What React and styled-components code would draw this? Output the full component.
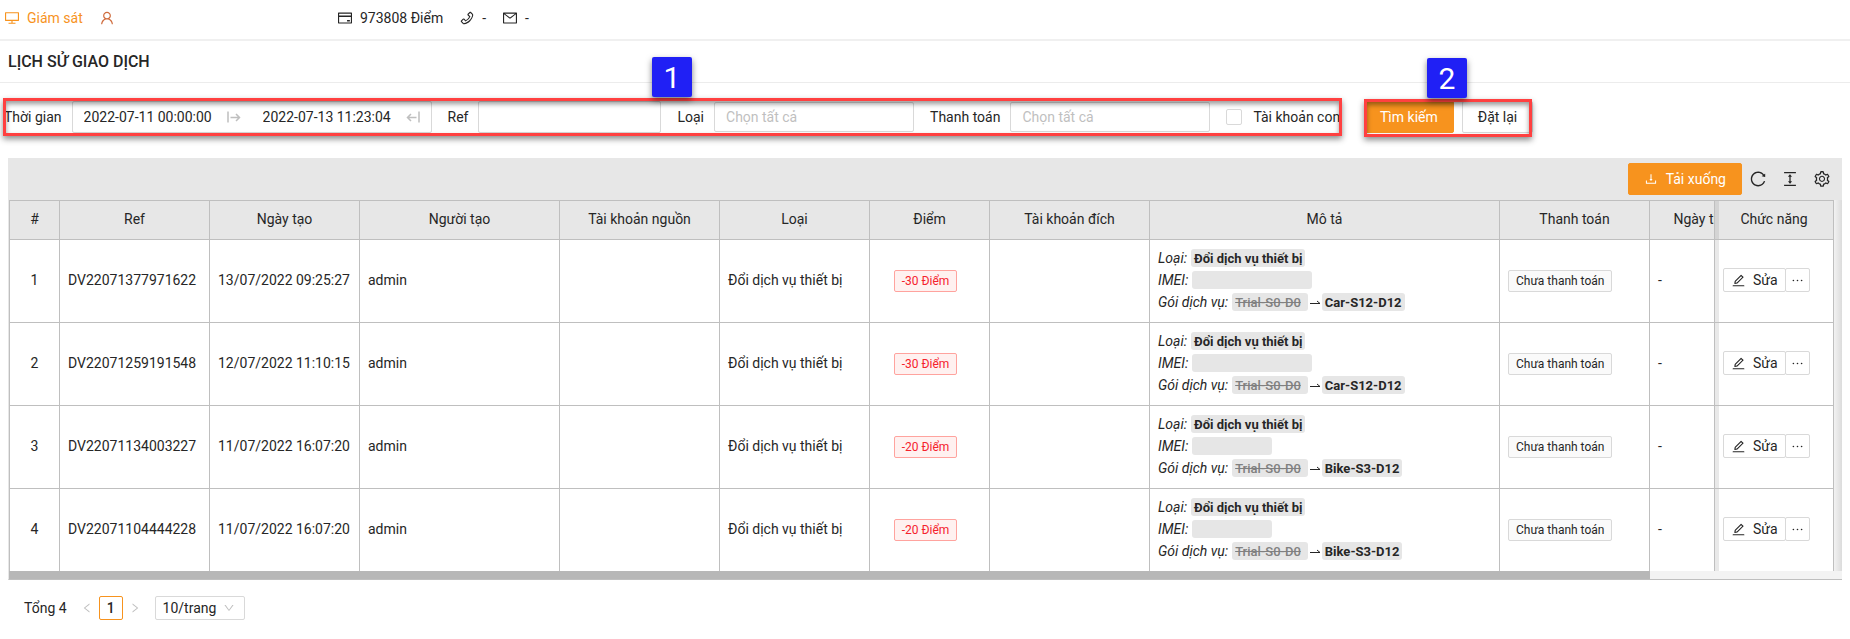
import React, { useState } from "react";
import styled, { createGlobalStyle, css } from "styled-components";
import {
  AiOutlineDesktop,
  AiOutlineUser,
  AiOutlineCreditCard,
  AiOutlinePhone,
  AiOutlineMail,
  AiOutlineDownload,
  AiOutlineReload,
  AiOutlineColumnHeight,
  AiOutlineSetting,
  AiOutlineEdit,
  AiOutlineEllipsis,
  AiOutlineLeft,
  AiOutlineRight,
  AiOutlineDown,
} from "react-icons/ai";

const orange = "#f7931e";
const line = "#bfbfbf";
const grey = "#e7e7e7";
const field = "#d9d9d9";

const GlobalStyle = createGlobalStyle`
  *, *::before, *::after { box-sizing: border-box; }
  body {
    margin: 0;
    background: #fff;
    color: #262626;
    font: 14px/22px Roboto, "Liberation Sans", sans-serif;
  }
  button, input, select { font: inherit; color: inherit; margin: 0; }
  svg { display: block; flex: none; }
`;

const TopBar = styled.header`
  display: flex;
  align-items: center;
  height: 41px;
  padding: 0 4px 4px;
  border-bottom: 2px solid #f0f0f0;
`;

const TopNav = styled.nav`
  display: flex;
  align-items: center;
  gap: 16px;
  width: 333px;
`;

const TopLink = styled.a`
  display: flex;
  align-items: center;
  gap: 7px;
  color: ${(p) => (p.$muted ? "#cf6b3c" : orange)};
  text-decoration: none;
`;

const Contacts = styled.div`
  display: flex;
  gap: 16px;
`;

const Contact = styled.span`
  display: flex;
  align-items: center;
  gap: 7px;
`;

const TitleBar = styled.div`
  padding: 10px 8px 9px;
  border-bottom: 1px solid #ececec;
`;

const Title = styled.h1`
  margin: 0;
  font-size: 16px;
  line-height: 22px;
  font-weight: 500;
`;

const Filters = styled.form`
  display: flex;
  align-items: flex-start;
  gap: 22px;
  padding: 15px 0 21px 3px;
`;

const Marked = styled.div`
  position: relative;
  display: flex;
  align-items: center;
  height: 38px;
  &::after {
    content: "";
    position: absolute;
    inset: 0;
    border: 3px solid #ff4040;
    box-shadow: 0 3px 6px rgba(0, 0, 0, 0.45), inset 0 3px 5px rgba(0, 0, 0, 0.4);
    pointer-events: none;
  }
`;

const FieldGroup = styled(Marked)`
  width: 1339px;
  gap: 16px;
  padding-left: 1px;
`;

const ButtonGroup = styled(Marked)`
  width: 168px;
  gap: 8px;
  padding-bottom: 2px;
  margin-top: 1px;
`;

const Step = styled.span`
  position: absolute;
  z-index: 1;
  left: ${(p) => p.$left};
  bottom: calc(100% + 1px);
  width: 40px;
  height: 40px;
  border-radius: 2px;
  background: #2020f5;
  color: #fff;
  font: 30px/42px Roboto, sans-serif;
  text-align: center;
  box-shadow: 0 3px 6px rgba(0, 0, 0, 0.5);
`;

const Field = styled.label`
  display: flex;
  align-items: center;
  gap: 10px;
  white-space: nowrap;
`;

const boxed = css`
  height: 32px;
  border: 1px solid ${field};
  border-radius: 2px;
  background: #fff;
  outline: 0;
`;

const Range = styled.div`
  ${boxed}
  display: flex;
  align-items: center;
  width: 360px;
`;

const RangePart = styled.span`
  display: flex;
  flex: 1 1 0;
  min-width: 0;
  align-items: center;
  padding-right: 11px;
  color: #bfbfbf;
`;

const DateInput = styled.input`
  flex: 1 1 0;
  min-width: 0;
  padding: 0 0 0 11px;
  border: 0;
  outline: 0;
  background: none;
  color: #262626;
`;

const TextInput = styled.input`
  ${boxed}
  width: 183px;
  padding: 0 11px;
`;

const SelectInput = styled.select`
  ${boxed}
  width: 200px;
  height: 30px;
  padding: 0 11px;
  appearance: none;
  color: #bfbfbf;
`;

const Check = styled.input`
  appearance: none;
  width: 16px;
  height: 16px;
  border: 1px solid ${field};
  border-radius: 2px;
  background: #fff;
`;

const CheckField = styled(Field)`
  gap: 11px;
`;

const Button = styled.button`
  display: flex;
  align-items: center;
  gap: 8px;
  height: 32px;
  padding: 0 ${(p) => p.$pad || 15}px;
  border: 1px solid ${(p) => (p.$primary ? orange : field)};
  border-radius: 2px;
  background: ${(p) => (p.$primary ? orange : "#fff")};
  color: ${(p) => (p.$primary ? "#fff" : "#262626")};
  white-space: nowrap;
`;

const Panel = styled.section`
  margin: 0 8px;
`;

const Toolbar = styled.div`
  display: flex;
  justify-content: flex-end;
  align-items: center;
  gap: 7px;
  height: 42px;
  padding: 0 11px 0 8px;
  background: ${grey};
`;

const Tools = styled.div`
  display: flex;
  gap: 14px;
`;

const IconButton = styled.button`
  display: flex;
  padding: 0;
  border: 0;
  background: none;
`;

const TableFrame = styled.div`
  display: flex;
  border-left: 1px solid ${grey};
`;

const Scroller = styled.div`
  flex: 1;
  min-width: 0;
  overflow-x: auto;
  scrollbar-width: none;
`;

const Gutter = styled.div`
  width: 8px;
  background: linear-gradient(to right, #f2f2f2, #dcdcdc);
`;

const Table = styled.table`
  width: 1911px;
  table-layout: fixed;
  border-collapse: separate;
  border-spacing: 0;
  border-top: 1px solid ${line};
  border-left: 1px solid ${line};
`;

const Th = styled.th`
  height: 39px;
  padding: 0 8px 2px;
  border-right: 1px solid ${line};
  border-bottom: 1px solid ${line};
  background: ${grey};
  font-weight: 400;
  text-align: center;
  white-space: nowrap;
  ${(p) =>
    p.$fixed &&
    css`
      position: sticky;
      right: 0;
      border-left: 1px solid ${line};
      background: linear-gradient(to right, #d4d4d4 4px, ${grey} 4px);
    `}
`;

const Td = styled.td`
  height: 83px;
  padding: 0 8px 2px;
  border-right: 1px solid ${line};
  border-bottom: 1px solid ${line};
  background: #fff;
  text-align: ${(p) => (p.$center ? "center" : "left")};
  white-space: nowrap;
  tr:last-child > & {
    height: 82px;
    border-bottom: 0;
  }
  ${(p) =>
    p.$fixed &&
    css`
      position: sticky;
      right: 0;
      border-left: 1px solid ${line};
      background: linear-gradient(to right, #e9e9e9 4px, #fff 4px);
    `}
`;

const Tag = styled.span`
  display: inline-block;
  margin-right: 8px;
  padding: 0 7px;
  border: 1px solid ${(p) => (p.$red ? "#ffa39e" : field)};
  border-radius: 2px;
  background: ${(p) => (p.$red ? "#fff1f0" : "#fafafa")};
  color: ${(p) => (p.$red ? "#f5222d" : "#262626")};
  font-size: 12px;
  line-height: 20px;
`;

const Detail = styled.div`
  display: flex;
  align-items: center;
  gap: 4px;
  height: 22px;
`;

const Chip = styled.strong`
  height: 18px;
  padding: 0 3px;
  border-radius: 3px;
  background: #e6e6e6;
  font-size: 13px;
  line-height: 19px;
  font-weight: 700;
`;

const OldChip = styled.del`
  height: 18px;
  padding: 0 7px 0 3px;
  border-radius: 3px;
  background: #e6e6e6;
  color: #808080;
  font-size: 13px;
  line-height: 19px;
  font-weight: 500;
`;

const Blank = styled.span`
  width: ${(p) => p.$width}px;
  height: 18px;
  border-radius: 3px;
  background: #e6e6e6;
`;

const Change = styled.span`
  display: flex;
  align-items: center;
  gap: 2px;
`;

const Actions = styled.div`
  display: flex;
`;

const ActionButton = styled.button`
  display: flex;
  align-items: center;
  gap: 7px;
  height: 24px;
  padding: 0 ${(p) => (p.$more ? 4 : 7)}px;
  border: 1px solid ${field};
  border-radius: 2px;
  background: #fff;
  & + & {
    margin-left: -1px;
  }
`;

const Track = styled.div`
  height: 9px;
  border-bottom: 1px solid ${line};
  border-left: 1px solid ${grey};
  background: #f3f3f3;
`;

const Thumb = styled.div`
  width: 1641px;
  max-width: 90%;
  height: 8px;
  background: #b7b7b7;
`;

const Pager = styled.nav`
  display: flex;
  align-items: center;
  gap: 6px;
  padding: 16px;
`;

const PageStep = styled.button`
  display: flex;
  padding: 0;
  border: 0;
  background: none;
  color: #bfbfbf;
`;

const PageNumber = styled.button`
  width: 24px;
  height: 24px;
  padding: 0;
  border: 1px solid ${orange};
  border-radius: 2px;
  background: #fff;
  font-weight: 500;
  line-height: 22px;
`;

const Total = styled.span`
  margin-right: 8px;
`;

const SizeBox = styled.span`
  display: grid;
  align-items: center;
  margin-left: 8px;
  > * {
    grid-area: 1 / 1;
  }
  svg {
    justify-self: end;
    margin-right: 10px;
    color: #bfbfbf;
    pointer-events: none;
  }
`;

const SizeSelect = styled.select`
  width: 90px;
  height: 24px;
  padding: 0 7px;
  border: 1px solid ${field};
  border-radius: 2px;
  background: #fff;
  appearance: none;
`;

const columns = [
  ["#", 50],
  ["Ref", 150],
  ["Ngày tạo", 150],
  ["Người tạo", 200],
  ["Tài khoản nguồn", 160],
  ["Loại", 150],
  ["Điểm", 120],
  ["Tài khoản đích", 160],
  ["Mô tả", 350],
  ["Thanh toán", 150],
  ["Ngày thanh toán", 150],
  ["Chức năng", 120],
];

const rows = [
  { ref: "DV22071377971622", date: "13/07/2022 09:25:27", points: "-30 Điểm", imei: 120, plan: "Car-S12-D12" },
  { ref: "DV22071259191548", date: "12/07/2022 11:10:15", points: "-30 Điểm", imei: 120, plan: "Car-S12-D12" },
  { ref: "DV22071134003227", date: "11/07/2022 16:07:20", points: "-20 Điểm", imei: 80, plan: "Bike-S3-D12" },
  { ref: "DV22071104444228", date: "11/07/2022 16:07:20", points: "-20 Điểm", imei: 80, plan: "Bike-S3-D12" },
];

function StartIcon() {
  return (
    <svg width="14" height="14" viewBox="0 0 14 14" fill="none" stroke="currentColor" strokeWidth="1.500">
      <path d="M1 1.500v11M3.500 7.500h9M9 4l3.500 3.500L9 11" />
    </svg>
  );
}

function EndIcon() {
  return (
    <svg width="14" height="14" viewBox="0 0 14 14" fill="none" stroke="currentColor" strokeWidth="1.500">
      <path d="M13 1.500v11M10.500 7.500h-9M5 4L1.500 7.500 5 11" />
    </svg>
  );
}

function Harpoon() {
  return (
    <svg width="10" height="8" viewBox="0 0 10 8" fill="none" stroke="#262626">
      <path d="M0 5.500h10L7 3" />
    </svg>
  );
}

function Row({ row, index }) {
  return (
    <tr>
      <Td $center>{index}</Td>
      <Td>{row.ref}</Td>
      <Td>{row.date}</Td>
      <Td>admin</Td>
      <Td />
      <Td>Đổi dịch vụ thiết bị</Td>
      <Td $center>
        <Tag $red>{row.points}</Tag>
      </Td>
      <Td />
      <Td>
        <Detail>
          <em>Loại:</em>
          <Chip>Đổi dịch vụ thiết bị</Chip>
        </Detail>
        <Detail>
          <em>IMEI:</em>
          <Blank $width={row.imei} />
        </Detail>
        <Detail>
          <em>Gói dịch vụ:</em>
          <Change>
            <OldChip>Trial-S0-D0</OldChip>
            <Harpoon />
            <Chip>{row.plan}</Chip>
          </Change>
        </Detail>
      </Td>
      <Td>
        <Tag>Chưa thanh toán</Tag>
      </Td>
      <Td>-</Td>
      <Td $fixed>
        <Actions>
          <ActionButton type="button">
            <AiOutlineEdit size={15} />
            Sửa
          </ActionButton>
          <ActionButton type="button" $more aria-label="Thêm">
            <AiOutlineEllipsis size={15} />
          </ActionButton>
        </Actions>
      </Td>
    </tr>
  );
}

export default function App() {
  const [from, setFrom] = useState("2022-07-11 00:00:00");
  const [to, setTo] = useState("2022-07-13 11:23:04");
  return (
    <>
      <GlobalStyle />
      <TopBar>
        <TopNav>
          <TopLink href="#monitor">
            <AiOutlineDesktop size={16} />
            Giám sát
          </TopLink>
          <TopLink href="#account" $muted aria-label="Tài khoản">
            <AiOutlineUser size={16} />
          </TopLink>
        </TopNav>
        <Contacts>
          <Contact>
            <AiOutlineCreditCard size={16} />
            973808 Điểm
          </Contact>
          <Contact>
            <AiOutlinePhone size={16} />-
          </Contact>
          <Contact>
            <AiOutlineMail size={16} />-
          </Contact>
        </Contacts>
      </TopBar>
      <TitleBar>
        <Title>LỊCH SỬ GIAO DỊCH</Title>
      </TitleBar>
      <Filters onSubmit={(e) => e.preventDefault()}>
        <FieldGroup>
          <Step $left="649px">1</Step>
          <Field as="div">
            <label htmlFor="from">Thời gian</label>
            <Range>
              <RangePart>
                <DateInput id="from" value={from} onChange={(e) => setFrom(e.target.value)} />
                <StartIcon />
              </RangePart>
              <RangePart>
                <DateInput aria-label="Đến" value={to} onChange={(e) => setTo(e.target.value)} />
                <EndIcon />
              </RangePart>
            </Range>
          </Field>
          <Field>
            Ref
            <TextInput />
          </Field>
          <Field>
            Loại
            <SelectInput>
              <option>Chọn tất cả</option>
            </SelectInput>
          </Field>
          <Field>
            Thanh toán
            <SelectInput>
              <option>Chọn tất cả</option>
            </SelectInput>
          </Field>
          <CheckField>
            <Check type="checkbox" />
            Tài khoản con
          </CheckField>
        </FieldGroup>
        <ButtonGroup>
          <Step $left="63px">2</Step>
          <Button $primary>Tìm kiếm</Button>
          <Button type="reset">Đặt lại</Button>
        </ButtonGroup>
      </Filters>
      <Panel>
        <Toolbar>
          <Button type="button" $primary>
            <AiOutlineDownload size={14} />
            Tải xuống
          </Button>
          <Tools>
            <IconButton aria-label="Tải lại">
              <AiOutlineReload size={18} />
            </IconButton>
            <IconButton aria-label="Mật độ">
              <AiOutlineColumnHeight size={18} />
            </IconButton>
            <IconButton aria-label="Cài đặt">
              <AiOutlineSetting size={18} />
            </IconButton>
          </Tools>
        </Toolbar>
        <TableFrame>
          <Scroller>
            <Table>
              <colgroup>
                {columns.map(([name, width]) => (
                  <col key={name} width={width} />
                ))}
              </colgroup>
              <thead>
                <tr>
                  {columns.map(([name]) => (
                    <Th key={name} $fixed={name === "Chức năng"}>
                      {name}
                    </Th>
                  ))}
                </tr>
              </thead>
              <tbody>
                {rows.map((row, i) => (
                  <Row key={row.ref} row={row} index={i + 1} />
                ))}
              </tbody>
            </Table>
          </Scroller>
          <Gutter />
        </TableFrame>
        <Track>
          <Thumb />
        </Track>
        <Pager aria-label="Phân trang">
          <Total>Tổng 4</Total>
          <PageStep aria-label="Trang trước">
            <AiOutlineLeft size={12} />
          </PageStep>
          <PageNumber>1</PageNumber>
          <PageStep aria-label="Trang sau">
            <AiOutlineRight size={12} />
          </PageStep>
          <SizeBox>
            <SizeSelect aria-label="Số dòng mỗi trang">
              <option>10/trang</option>
            </SizeSelect>
            <AiOutlineDown size={12} />
          </SizeBox>
        </Pager>
      </Panel>
    </>
  );
}
